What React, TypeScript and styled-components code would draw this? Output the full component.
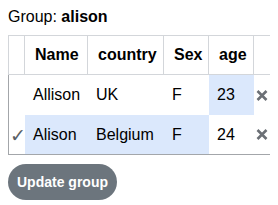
import styled, { createGlobalStyle } from "styled-components";

const GlobalStyle = createGlobalStyle`
  html {
    overflow: hidden;
  }
  body {
    margin: 8px 8px 0;
    font-family: "Liberation Sans", Arial, sans-serif;
    color: #000;
    background: #fff;
  }
`;

const GroupLabel = styled.div`
  font-size: 16px;
  line-height: 18px;
  margin-bottom: 9px;

  b {
    font-weight: bold;
  }
`;

const TableFrame = styled.div`
  width: 263px;
`;

const Table = styled.table`
  border-collapse: separate;
  border-spacing: 0;
  table-layout: fixed;
  width: 100%;
  font-size: 16px;
`;

const Col = styled.col<{ $w: number }>`
  width: ${(p) => p.$w}px;
`;

const HeadCell = styled.th`
  box-sizing: border-box;
  height: 40px;
  padding: 0 10px;
  text-align: left;
  font-weight: bold;
  white-space: nowrap;
  border-top: 1px solid #d3d6da;
  border-bottom: 1px solid #d3d6da;
  border-right: 1px solid #d3d6da;

  &:first-child {
    border-left: 1px solid #d3d6da;
    padding: 0;
  }
  &:last-child {
    padding: 0;
  }
`;

const Cell = styled.td<{ $active?: boolean }>`
  box-sizing: border-box;
  height: 40px;
  padding: 0 8px;
  background: ${(p) => (p.$active ? "#dbe8fc" : "transparent")};
  white-space: nowrap;

  &:first-child {
    border-left: 1px solid #a3a6aa;
    padding: 0;
    text-align: center;
  }
  &:last-child {
    border-right: 1px solid #a3a6aa;
    padding: 0;
    text-align: center;
  }
`;

const Row = styled.tr`
  &:last-child td {
    border-bottom: 1px solid #a3a6aa;
  }
`;

const Check = styled.span`
  color: #5a5f66;
  font-family: "DejaVu Sans", sans-serif;
  font-size: 19px;
  position: relative;
  left: 1px;
`;

const UpdateButton = styled.button`
  display: block;
  margin-top: 9px;
  height: 36px;
  padding: 0 9px;
  border: none;
  border-radius: 18px;
  background: #6c757d;
  color: #fff;
  font-family: "Liberation Sans", Arial, sans-serif;
  font-weight: bold;
  font-size: 14px;
  cursor: pointer;
`;

function RemoveIcon() {
  return (
    <svg width="12" height="11" viewBox="0 0 12 11" style={{ display: "block", margin: "0 auto" }}>
      <path d="M1.5 1 L10.5 10 M10.5 1 L1.5 10" stroke="#6b6f75" strokeWidth="2.6" />
    </svg>
  );
}

const columns = [
  { key: "", w: 17 },
  { key: "Name", w: 63 },
  { key: "country", w: 76 },
  { key: "Sex", w: 45 },
  { key: "age", w: 45 },
  { key: "", w: 17 },
];

const people = [
  { name: "Allison", country: "UK", sex: "F", age: 23, selected: false, focus: [false, false, false, true] },
  { name: "Alison", country: "Belgium", sex: "F", age: 24, selected: true, focus: [true, true, true, false] },
];

export default function App() {
  return (
    <>
      <GlobalStyle />
      <GroupLabel>
        Group: <b>alison</b>
      </GroupLabel>
      <TableFrame>
        <Table>
          <colgroup>
            {columns.map((c, i) => (
              <Col key={i} $w={c.w} />
            ))}
          </colgroup>
          <thead>
            <tr>
              {columns.map((c, i) => (
                <HeadCell key={i}>{c.key}</HeadCell>
              ))}
            </tr>
          </thead>
          <tbody>
            {people.map((p) => (
              <Row key={p.name}>
                <Cell>{p.selected && <Check>✓</Check>}</Cell>
                <Cell $active={p.focus[0]}>{p.name}</Cell>
                <Cell $active={p.focus[1]}>{p.country}</Cell>
                <Cell $active={p.focus[2]}>{p.sex}</Cell>
                <Cell $active={p.focus[3]}>{p.age}</Cell>
                <Cell>
                  <RemoveIcon />
                </Cell>
              </Row>
            ))}
          </tbody>
        </Table>
      </TableFrame>
      <UpdateButton>Update group</UpdateButton>
    </>
  );
}
